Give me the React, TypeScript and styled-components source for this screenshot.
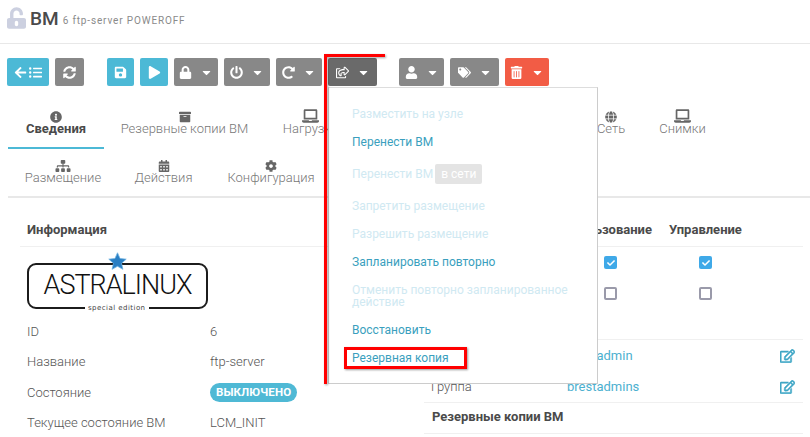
import React from 'react'
import styled, { createGlobalStyle } from 'styled-components'
import {
  FaArchive,
  FaArrowLeft,
  FaCalendarAlt,
  FaCaretDown,
  FaCheck,
  FaCog,
  FaGlobe,
  FaInfoCircle,
  FaLaptop,
  FaListUl,
  FaLock,
  FaPlay,
  FaPowerOff,
  FaRedoAlt,
  FaRegEdit,
  FaRegShareSquare,
  FaSave,
  FaSitemap,
  FaSyncAlt,
  FaTags,
  FaTrashAlt,
  FaUnlockAlt,
  FaUser,
} from 'react-icons/fa'

const GlobalStyle = createGlobalStyle`
  html, body {
    margin: 0;
    padding: 0;
    background: #fff;
  }
  * {
    box-sizing: border-box;
  }
`

const Page = styled.div`
  width: 810px;
  height: 437px;
  position: relative;
  overflow: hidden;
  background: #fff;
  font-family: Roboto, 'Liberation Sans', sans-serif;
  color: #555;
`

const Header = styled.div`
  height: 44px;
  border-bottom: 1px solid #e8e8e8;
  display: flex;
  align-items: center;
  padding: 0 0 7px 7px;
  gap: 4px;
`

const LockIcon = styled(FaUnlockAlt)`
  width: 19px;
  height: 22px;
  color: #ccd0e0;
`

const Title = styled.span`
  font-size: 19px;
  font-weight: 500;
  color: #4a4a4a;
`

const Subtitle = styled.span`
  font-size: 10px;
  letter-spacing: 0.85px;
  color: #8a8a8a;
  padding-top: 4px;
`

const Toolbar = styled.div`
  display: flex;
  gap: 6px;
  padding: 14px 0 0 7px;
`

const Button = styled.div<{ $w: number; $kind?: string; $push?: number }>`
  width: ${(p) => p.$w}px;
  height: 28px;
  margin-left: ${(p) => p.$push || 0}px;
  border-radius: 2px;
  display: flex;
  align-items: center;
  justify-content: center;
  gap: 8px;
  color: #fff;
  font-size: 13px;
  background: ${(p) =>
    p.$kind === 'info'
      ? '#4cb9d6'
      : p.$kind === 'alert'
        ? '#f25c45'
        : p.$kind === 'dark'
          ? '#6a6a6a'
          : '#888'};
`

const BackIcons = styled.span`
  display: flex;
  align-items: center;
  gap: 2px;
`

const TabRow = styled.div<{ $h: number }>`
  display: flex;
  height: ${(p) => p.$h}px;
`

const Tabs = styled.div`
  margin: 14px 0 0 8px;
  border-bottom: 2px solid #e8e8e8;
`

const Tab = styled.div<{ $w: number; $active?: boolean }>`
  width: ${(p) => p.$w}px;
  padding: 11px 0 0;
  display: flex;
  flex-direction: column;
  align-items: center;
  font-size: 13px;
  line-height: 12px;
  white-space: nowrap;
  font-weight: ${(p) => (p.$active ? 700 : 300)};
  color: ${(p) => (p.$active ? '#4a4a4a' : '#777')};
  box-shadow: ${(p) => (p.$active ? 'inset 0 -2px 0 #4cb9d6' : 'none')};
  svg {
    height: 12px;
    width: 16px;
    color: #666;
  }
`

const LaptopIcon = styled(FaLaptop)`
  && {
    height: 14px;
    width: 17px;
    margin: -2px 0 0;
  }
`

const Columns = styled.div`
  display: flex;
  padding: 24px 7px 0 20px;
  gap: 14px;
`

const LeftColumn = styled.div`
  width: 390px;
`

const RightColumn = styled.div`
  width: 379px;
`

const SectionTitle = styled.div`
  height: 25px;
  padding: 0 7px;
  line-height: 16px;
  font-size: 13px;
  font-weight: 700;
  color: #4a4a4a;
  border-bottom: 1px solid #f0f0f0;
`

const BackupTitle = styled(SectionTitle)`
  height: 32px;
  padding: 6px 8px 0;
  border-top: 1px solid #f0f0f0;
`

const Logo = styled.div`
  position: relative;
  width: 181px;
  height: 46px;
  margin: 16px 0 7px 7px;
  border: 2px solid #1c1c1c;
  border-radius: 9px;
  display: flex;
  align-items: center;
  justify-content: center;
`

const LogoText = styled.span`
  font-family: Roboto, sans-serif;
  font-weight: 300;
  font-size: 27px;
  line-height: 30px;
  letter-spacing: -1px;
  color: #111;
  margin-bottom: 3px;
`

const LogoEdition = styled.span`
  position: absolute;
  left: 56px;
  bottom: -6px;
  padding: 0 3px;
  font-family: 'DejaVu Sans', sans-serif;
  font-size: 7px;
  line-height: 9px;
  letter-spacing: 0.45px;
  background: #fff;
  color: #444;
`

const LogoStar = styled.svg`
  position: absolute;
  left: 79px;
  top: -13px;
  width: 19px;
  height: 19px;
`

const InfoRow = styled.div`
  display: grid;
  grid-template-columns: 183px 1fr;
  height: 30.5px;
  align-items: center;
  padding-left: 7px;
  font-size: 13px;
  font-weight: 300;
  color: #555;
`

const StatusPill = styled.span`
  justify-self: start;
  height: 19px;
  padding: 0 6px;
  border-radius: 10px;
  background: #4fb9d5;
  color: #fff;
  font-size: 11.5px;
  font-weight: 700;
  line-height: 19px;
  letter-spacing: 0.1px;
`

const PermissionGrid = styled.div`
  display: grid;
  grid-template-columns: 139px 95px 95px;
  height: 25px;
  border-bottom: 1px solid #f0f0f0;
  line-height: 16px;
  font-size: 13px;
  font-weight: 700;
  color: #4a4a4a;
  text-align: center;
  white-space: nowrap;
`

const UsageHeading = styled.span`
  justify-self: end;
  padding-right: 6px;
`

const PermissionRow = styled.div`
  display: grid;
  grid-template-columns: 139px 95px 95px;
  height: 31px;
  align-items: center;
  justify-items: center;
`

const Checkbox = styled.span<{ $on?: boolean }>`
  width: 13px;
  height: 13px;
  border-radius: 2px;
  display: flex;
  align-items: center;
  justify-content: center;
  border: ${(p) => (p.$on ? 'none' : '2px solid #9a9aaa')};
  background: ${(p) => (p.$on ? '#3fa9e8' : '#fff')};
  color: #fff;
  font-size: 8px;
`

const OwnerSection = styled.div`
  margin-top: 6px;
`

const OwnerRow = styled.div`
  display: grid;
  grid-template-columns: 136px 1fr 23px;
  height: 31px;
  align-items: center;
  padding-left: 7px;
  font-size: 13px;
  font-weight: 300;
`

const OwnerLink = styled.span`
  color: #4cb0cf;
  font-weight: 400;
  font-size: 13px;
`

const EditIcon = styled(FaRegEdit)`
  width: 15px;
  height: 14px;
  color: #3ea6c6;
  stroke: #3ea6c6;
  stroke-width: 20px;
`

const Menu = styled.div`
  position: absolute;
  left: 328px;
  top: 87px;
  width: 270px;
  height: 297px;
  padding: 12px 16px 12px 23px;
  background: #fff;
  border: 1px solid #ccc;
  border-top-color: #ddd;
`

const MenuItem = styled.div<{ $disabled?: boolean }>`
  display: flex;
  align-items: center;
  gap: 2px;
  padding: 8px 0;
  font-size: 12px;
  line-height: 12px;
  color: ${(p) => (p.$disabled ? '#d0e9f2' : '#3a9fbe')};
`

const Badge = styled.span`
  height: 20px;
  padding: 0 6px;
  border-radius: 2px;
  line-height: 20px;
  background: #e4e4e4;
  color: #fff;
`

const RedLine = styled.div`
  position: absolute;
  left: 324px;
  top: 54px;
  width: 61px;
  height: 330px;
  border-top: 3px solid #f00;
  border-left: 3px solid #f00;
  filter: drop-shadow(1px 1px 1px rgba(0, 0, 0, 0.35));
  pointer-events: none;
`

const RedFrame = styled.div`
  position: absolute;
  left: 344px;
  top: 347px;
  width: 123px;
  height: 22px;
  border: 3px solid #f00;
  box-shadow: 1px 1px 2px rgba(0, 0, 0, 0.4);
`

export default function App() {
  return (
    <Page>
      <GlobalStyle />
      <Header>
        <LockIcon />
        <Title>ВМ</Title>
        <Subtitle>6 ftp-server POWEROFF</Subtitle>
      </Header>

      <Toolbar>
        <Button $w={42} $kind="info">
          <BackIcons>
            <FaArrowLeft />
            <FaListUl />
          </BackIcons>
        </Button>
        <Button $w={29}><FaSyncAlt /></Button>
        <Button $w={27} $kind="info" $push={17}><FaSave /></Button>
        <Button $w={28} $kind="info"><FaPlay /></Button>
        <Button $w={44}><FaLock /><FaCaretDown /></Button>
        <Button $w={46}><FaPowerOff /><FaCaretDown /></Button>
        <Button $w={46}><FaRedoAlt /><FaCaretDown /></Button>
        <Button $w={49} $kind="dark"><FaRegShareSquare /><FaCaretDown /></Button>
        <Button $w={45} $push={16}><FaUser /><FaCaretDown /></Button>
        <Button $w={49}><FaTags /><FaCaretDown /></Button>
        <Button $w={44} $kind="alert"><FaTrashAlt /><FaCaretDown /></Button>
      </Toolbar>

      <Tabs>
        <TabRow $h={49}>
          <Tab $w={96} $active><FaInfoCircle />Сведения</Tab>
          <Tab $w={161}><FaArchive />Резервные копии ВМ</Tab>
          <Tab $w={91}><LaptopIcon />Нагрузка</Tab>
          <Tab $w={224} />
          <Tab $w={62}><FaGlobe />Сеть</Tab>
          <Tab $w={81}><LaptopIcon />Снимки</Tab>
        </TabRow>
        <TabRow $h={47}>
          <Tab $w={110}><FaSitemap />Размещение</Tab>
          <Tab $w={91}><FaCalendarAlt />Действия</Tab>
          <Tab $w={124}><FaCog />Конфигурация</Tab>
        </TabRow>
      </Tabs>

      <Columns>
        <LeftColumn>
          <SectionTitle>Информация</SectionTitle>
          <Logo>
            <LogoStar viewBox="0 0 24 24">
              <path
                d="M12 1l3.2 7.2 7.8.8-5.9 5.2 1.7 7.7L12 18l-6.8 3.9 1.7-7.7L1 9l7.8-.8z"
                fill="#2a7fc4"
                stroke="#6fb2e0"
                strokeWidth="1"
              />
            </LogoStar>
            <LogoText>ASTRALINUX</LogoText>
            <LogoEdition>special edition</LogoEdition>
          </Logo>
          <InfoRow>ID<span>6</span></InfoRow>
          <InfoRow>Название<span>ftp-server</span></InfoRow>
          <InfoRow>Состояние<StatusPill>ВЫКЛЮЧЕНО</StatusPill></InfoRow>
          <InfoRow>Текущее состояние ВМ<span>LCM_INIT</span></InfoRow>
        </LeftColumn>

        <RightColumn>
          <PermissionGrid>
            <span />
            <UsageHeading>Использование</UsageHeading>
            <span>Управление</span>
          </PermissionGrid>
          <PermissionRow>
            <span />
            <Checkbox $on><FaCheck /></Checkbox>
            <Checkbox $on><FaCheck /></Checkbox>
          </PermissionRow>
          <PermissionRow>
            <span />
            <Checkbox />
            <Checkbox />
          </PermissionRow>
          <OwnerSection>
            <SectionTitle />
            <OwnerRow><span /><OwnerLink>brestadmin</OwnerLink><EditIcon /></OwnerRow>
            <OwnerRow>Группа<OwnerLink>brestadmins</OwnerLink><EditIcon /></OwnerRow>
          </OwnerSection>
          <BackupTitle>Резервные копии ВМ</BackupTitle>
        </RightColumn>
      </Columns>

      <Menu>
        <MenuItem $disabled>Разместить на узле</MenuItem>
        <MenuItem>Перенести ВМ</MenuItem>
        <MenuItem $disabled>Перенести ВМ<Badge>в сети</Badge></MenuItem>
        <MenuItem $disabled>Запретить размещение</MenuItem>
        <MenuItem $disabled>Разрешить размещение</MenuItem>
        <MenuItem>Запланировать повторно</MenuItem>
        <MenuItem $disabled>Отменить повторно запланированное действие</MenuItem>
        <MenuItem>Восстановить</MenuItem>
        <MenuItem>Резервная копия</MenuItem>
      </Menu>
      <RedLine />
      <RedFrame />
    </Page>
  )
}
